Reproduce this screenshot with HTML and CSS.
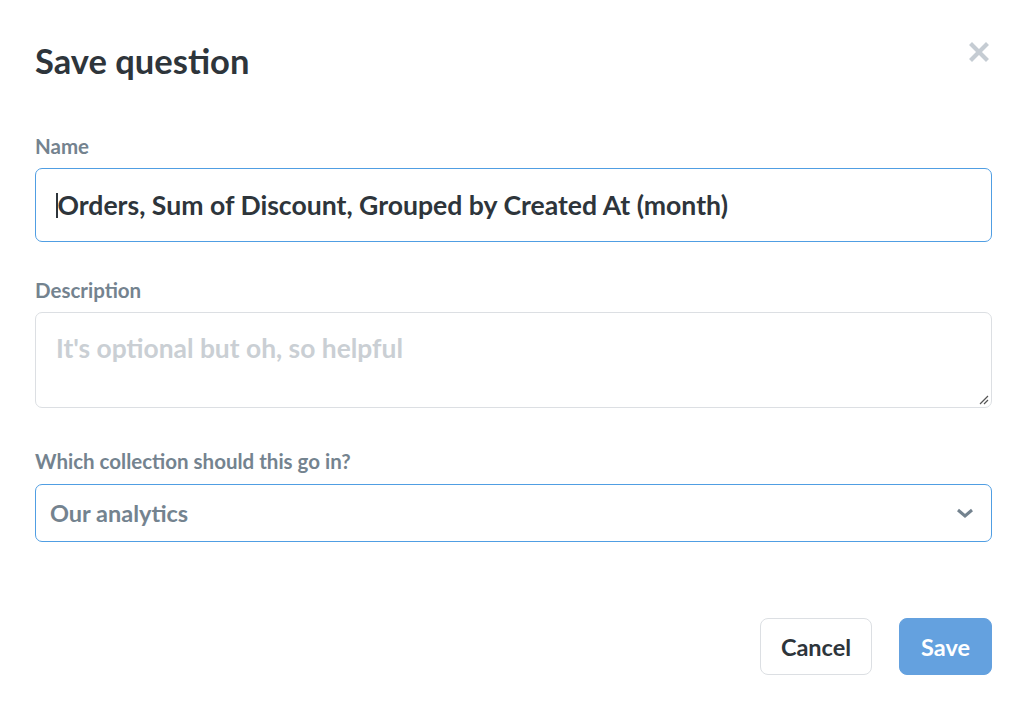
FILE: index.html
```html
<!DOCTYPE html>
<html>
<head>
<meta charset="utf-8">
<link rel="stylesheet" href="styles.css">
</head>
<body>
<div class="modal">
  <div class="header">
    <h1 class="title">Save question</h1>
    <button class="close" aria-label="Close">
      <svg width="22" height="22" viewBox="0 0 22 22"><path d="M4 4 L18 18 M18 4 L4 18" stroke="#c5ccd3" stroke-width="4.2" stroke-linecap="square"/></svg>
    </button>
  </div>
  <div class="field">
    <label class="label">Name</label>
    <div class="input focused"><span class="caret"></span>Orders, Sum of Discount, Grouped by Created At (month)</div>
  </div>
  <div class="field">
    <label class="label">Description</label>
    <div class="textarea">
      <span class="placeholder">It's optional but oh, so helpful</span>
      <svg class="grip" width="12" height="12" viewBox="0 0 12 12"><path d="M11 3 L3 11 M11 7 L7 11" stroke="#555" stroke-width="1.2"/></svg>
    </div>
  </div>
  <div class="field field-collection">
    <label class="label">Which collection should this go in?</label>
    <div class="select">
      <span>Our analytics</span>
      <svg width="18" height="12" viewBox="0 0 18 12"><path d="M2 3 L9 9 L16 3" fill="none" stroke="#74838f" stroke-width="3"/></svg>
    </div>
  </div>
  <div class="footer">
    <button class="btn cancel">Cancel</button>
    <button class="btn save">Save</button>
  </div>
</div>
</body>
</html>
```
FILE: styles.css
```css
html, body { margin: 0; padding: 0; background: #fff; }
body { font-family: Lato, "Open Sans", sans-serif; color: #2e353b; width: 1024px; height: 701px; overflow: hidden; }
.modal { padding: 37px 32px 0 35px; }
.header { display: flex; justify-content: space-between; align-items: flex-start; }
.title { margin: 0; font-size: 34.5px; font-weight: 700; line-height: 48px; color: #2e353b; }
.close { background: none; border: 0; padding: 0; margin: 4px 2px 0 0; width: 22px; height: 22px; display: block; }
.close svg { display: block; }
.label { display: block; font-size: 20.5px; font-weight: 700; color: #74838f; line-height: 24px; }
.header + .field { margin-top: 49px; }
.field + .field { margin-top: 36px; }
.field.field-collection { margin-top: 41px; }
.input { margin-top: 10px; box-sizing: border-box; height: 74px; border: 1px solid #509ee3; border-radius: 7px; padding: 0 20px; display: flex; align-items: center; font-size: 26.6px; font-weight: 700; color: #2e353b; }
.caret { display: inline-block; width: 1.5px; height: 25px; background: #2e353b; margin-right: 0; }
.textarea { margin-top: 10px; box-sizing: border-box; height: 96px; border: 1px solid #dcdfe3; border-radius: 7px; padding: 17px 20px; position: relative; }
.placeholder { font-size: 26.4px; font-weight: 700; color: #cacfd4; line-height: 36px; }
.grip { position: absolute; right: 2px; bottom: 2px; }
.select { margin-top: 11px; box-sizing: border-box; height: 58px; border: 1px solid #509ee3; border-radius: 7px; padding: 0 17px 0 14px; display: flex; justify-content: space-between; align-items: center; font-size: 23.5px; font-weight: 700; color: #74838f; }
.footer { display: flex; justify-content: flex-end; gap: 27px; margin-top: 76px; }
.btn { font-family: Lato, sans-serif; font-size: 23.5px; font-weight: 700; height: 57px; border-radius: 8px; padding: 0; cursor: pointer; }
.cancel { background: #fff; border: 1px solid #dcdfe3; color: #2e353b; width: 112px; }
.save { background: #64a1df; border: 1px solid #64a1df; color: #fff; width: 93px; }
```
